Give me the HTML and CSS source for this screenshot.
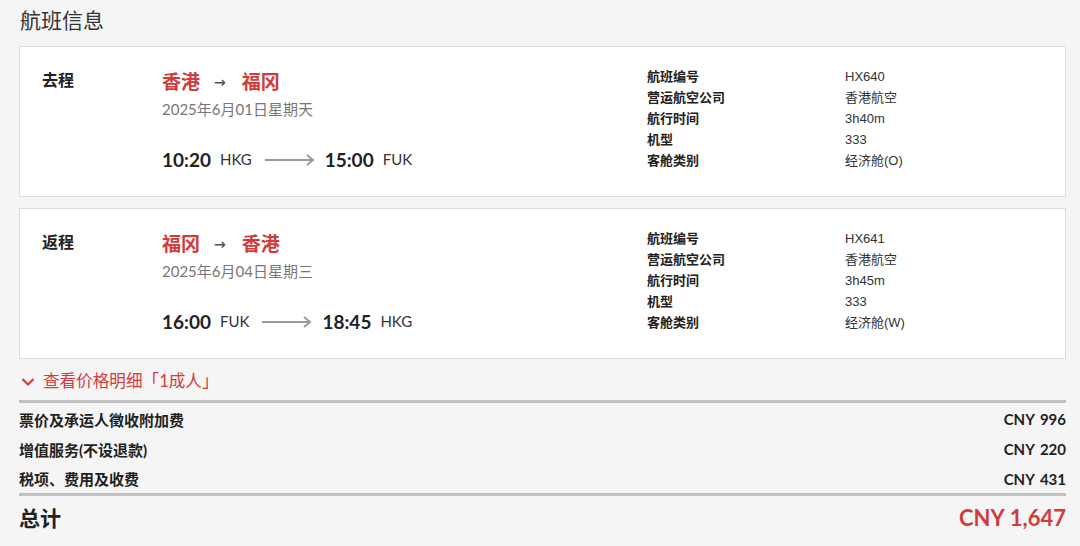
FILE: index.html
```html
<!DOCTYPE html>
<html lang="zh-CN">
<head>
<meta charset="utf-8">
<link rel="stylesheet" href="styles.css">
</head>
<body>
<div class="page">
  <h1 class="title">航班信息</h1>

  <div class="card">
    <div class="leg-label">去程</div>
    <div class="leg-main">
      <div class="route"><span>香港</span><span class="route-arrow">→</span><span>福冈</span></div>
      <div class="date">2025年6月01日星期天</div>
      <div class="times">
        <span class="time">10:20</span><span class="code">HKG</span>
        <svg class="long-arrow" width="50" height="12" viewBox="0 0 50 12"><path d="M0 6H48M42 1L48 6L42 11" fill="none" stroke="#9a9a9a" stroke-width="2"/></svg>
        <span class="time">15:00</span><span class="code">FUK</span>
      </div>
    </div>
    <dl class="details">
      <dt>航班编号</dt><dd>HX640</dd>
      <dt>营运航空公司</dt><dd>香港航空</dd>
      <dt>航行时间</dt><dd>3h40m</dd>
      <dt>机型</dt><dd>333</dd>
      <dt>客舱类别</dt><dd>经济舱(O)</dd>
    </dl>
  </div>

  <div class="card">
    <div class="leg-label">返程</div>
    <div class="leg-main">
      <div class="route"><span>福冈</span><span class="route-arrow">→</span><span>香港</span></div>
      <div class="date">2025年6月04日星期三</div>
      <div class="times">
        <span class="time">16:00</span><span class="code">FUK</span>
        <svg class="long-arrow" width="50" height="12" viewBox="0 0 50 12"><path d="M0 6H48M42 1L48 6L42 11" fill="none" stroke="#9a9a9a" stroke-width="2"/></svg>
        <span class="time">18:45</span><span class="code">HKG</span>
      </div>
    </div>
    <dl class="details">
      <dt>航班编号</dt><dd>HX641</dd>
      <dt>营运航空公司</dt><dd>香港航空</dd>
      <dt>航行时间</dt><dd>3h45m</dd>
      <dt>机型</dt><dd>333</dd>
      <dt>客舱类别</dt><dd>经济舱(W)</dd>
    </dl>
  </div>

  <div class="toggle">
    <svg class="chev" width="14" height="10" viewBox="0 0 14 10"><path d="M1.5 2L7 7.5L12.5 2" fill="none" stroke="#d13b3b" stroke-width="2.2"/></svg>
    <span>查看价格明细「1成人」</span>
  </div>

  <div class="prices">
    <div class="price-row"><span>票价及承运人徵收附加费</span><span class="amt">CNY<span class="num">996</span></span></div>
    <div class="price-row"><span>增值服务(不设退款)</span><span class="amt">CNY<span class="num">220</span></span></div>
    <div class="price-row"><span>税项、费用及收费</span><span class="amt">CNY<span class="num">431</span></span></div>
  </div>
  <div class="total"><span>总计</span><span class="total-amt">CNY<span class="num">1,647</span></span></div>
</div>
</body>
</html>
```

FILE: styles.css
```css
* { box-sizing: border-box; }
html, body { margin: 0; padding: 0; }
body {
  background: #f5f5f5;
  font-family: Lato, "Noto Sans CJK SC", sans-serif;
  color: #222;
  width: 1080px;
  height: 546px;
  overflow: hidden;
}
.page {
  padding: 0 14px 0 19px;
}
.title {
  margin: 0;
  padding: 7px 0 0 1px;
  font-size: 21px;
  line-height: 26px;
  font-weight: 400;
  color: #333;
  height: 46px;
}
.card {
  background: #fff;
  border: 1px solid #dcdcdc;
  display: flex;
  align-items: flex-start;
  padding: 18px 22px 22px 22px;
  margin-bottom: 11px;
}
.leg-label {
  width: 120px;
  margin-top: 4px;
  font-size: 16px;
  line-height: 22px;
  font-weight: 700;
  color: #222;
}
.leg-main {
  width: 485px;
}
.route {
  margin-top: 5px;
  font-size: 19px;
  line-height: 24px;
  font-weight: 700;
  color: #d13b3b;
  display: flex;
  align-items: center;
}
.route-arrow {
  color: #555;
  font-family: "DejaVu Sans", sans-serif;
  font-size: 14px;
  font-weight: 700;
  margin: 0 16px 0 14px;
}
.date {
  margin-top: 5px;
  font-size: 15px;
  line-height: 20px;
  color: #777;
}
.times {
  margin-top: 28px;
  margin-bottom: 3px;
  height: 24px;
  display: flex;
  align-items: center;
}
.time {
  font-size: 19px;
  font-weight: 700;
  color: #222;
}
.code {
  font-size: 15px;
  color: #333;
  margin-left: 9px;
}
.long-arrow {
  margin: 2px 10px 0 13px;
}
.details {
  margin: 1px 0 0 0;
  display: grid;
  grid-template-columns: 198px auto;
  font-family: "Liberation Sans", "Noto Sans CJK SC", sans-serif;
  font-size: 13px;
  line-height: 21px;
}
.details dt {
  margin: 0;
  font-weight: 700;
  color: #222;
}
.details dd {
  margin: 0;
  color: #333;
}
.toggle {
  margin-top: 2px;
  height: 22px;
  display: flex;
  align-items: center;
  color: #d13b3b;
  font-size: 16.6px;
  line-height: 22px;
  padding-left: 2px;
}
.chev {
  margin-right: 8px;
  margin-top: 1px;
}
.prices {
  margin-top: 8px;
  border-top: 3px solid #c2c2c2;
  border-bottom: 3px solid #c2c2c2;
  width: 1047px;
}
.price-row {
  display: flex;
  justify-content: space-between;
  height: 30px;
  align-items: center;
  font-size: 15px;
  font-weight: 700;
  color: #222;
}
.price-row:first-child { margin-top: 1px; }
.price-row:last-child { height: 29px; }
.amt .num, .total-amt .num { margin-left: 5px; }
.total {
  width: 1047px;
  display: flex;
  justify-content: space-between;
  align-items: center;
  height: 46px;
  padding-bottom: 4px;
  font-size: 21px;
  font-weight: 700;
  color: #222;
}
.total-amt {
  color: #d13b3b;
  font-size: 22px;
}
```
